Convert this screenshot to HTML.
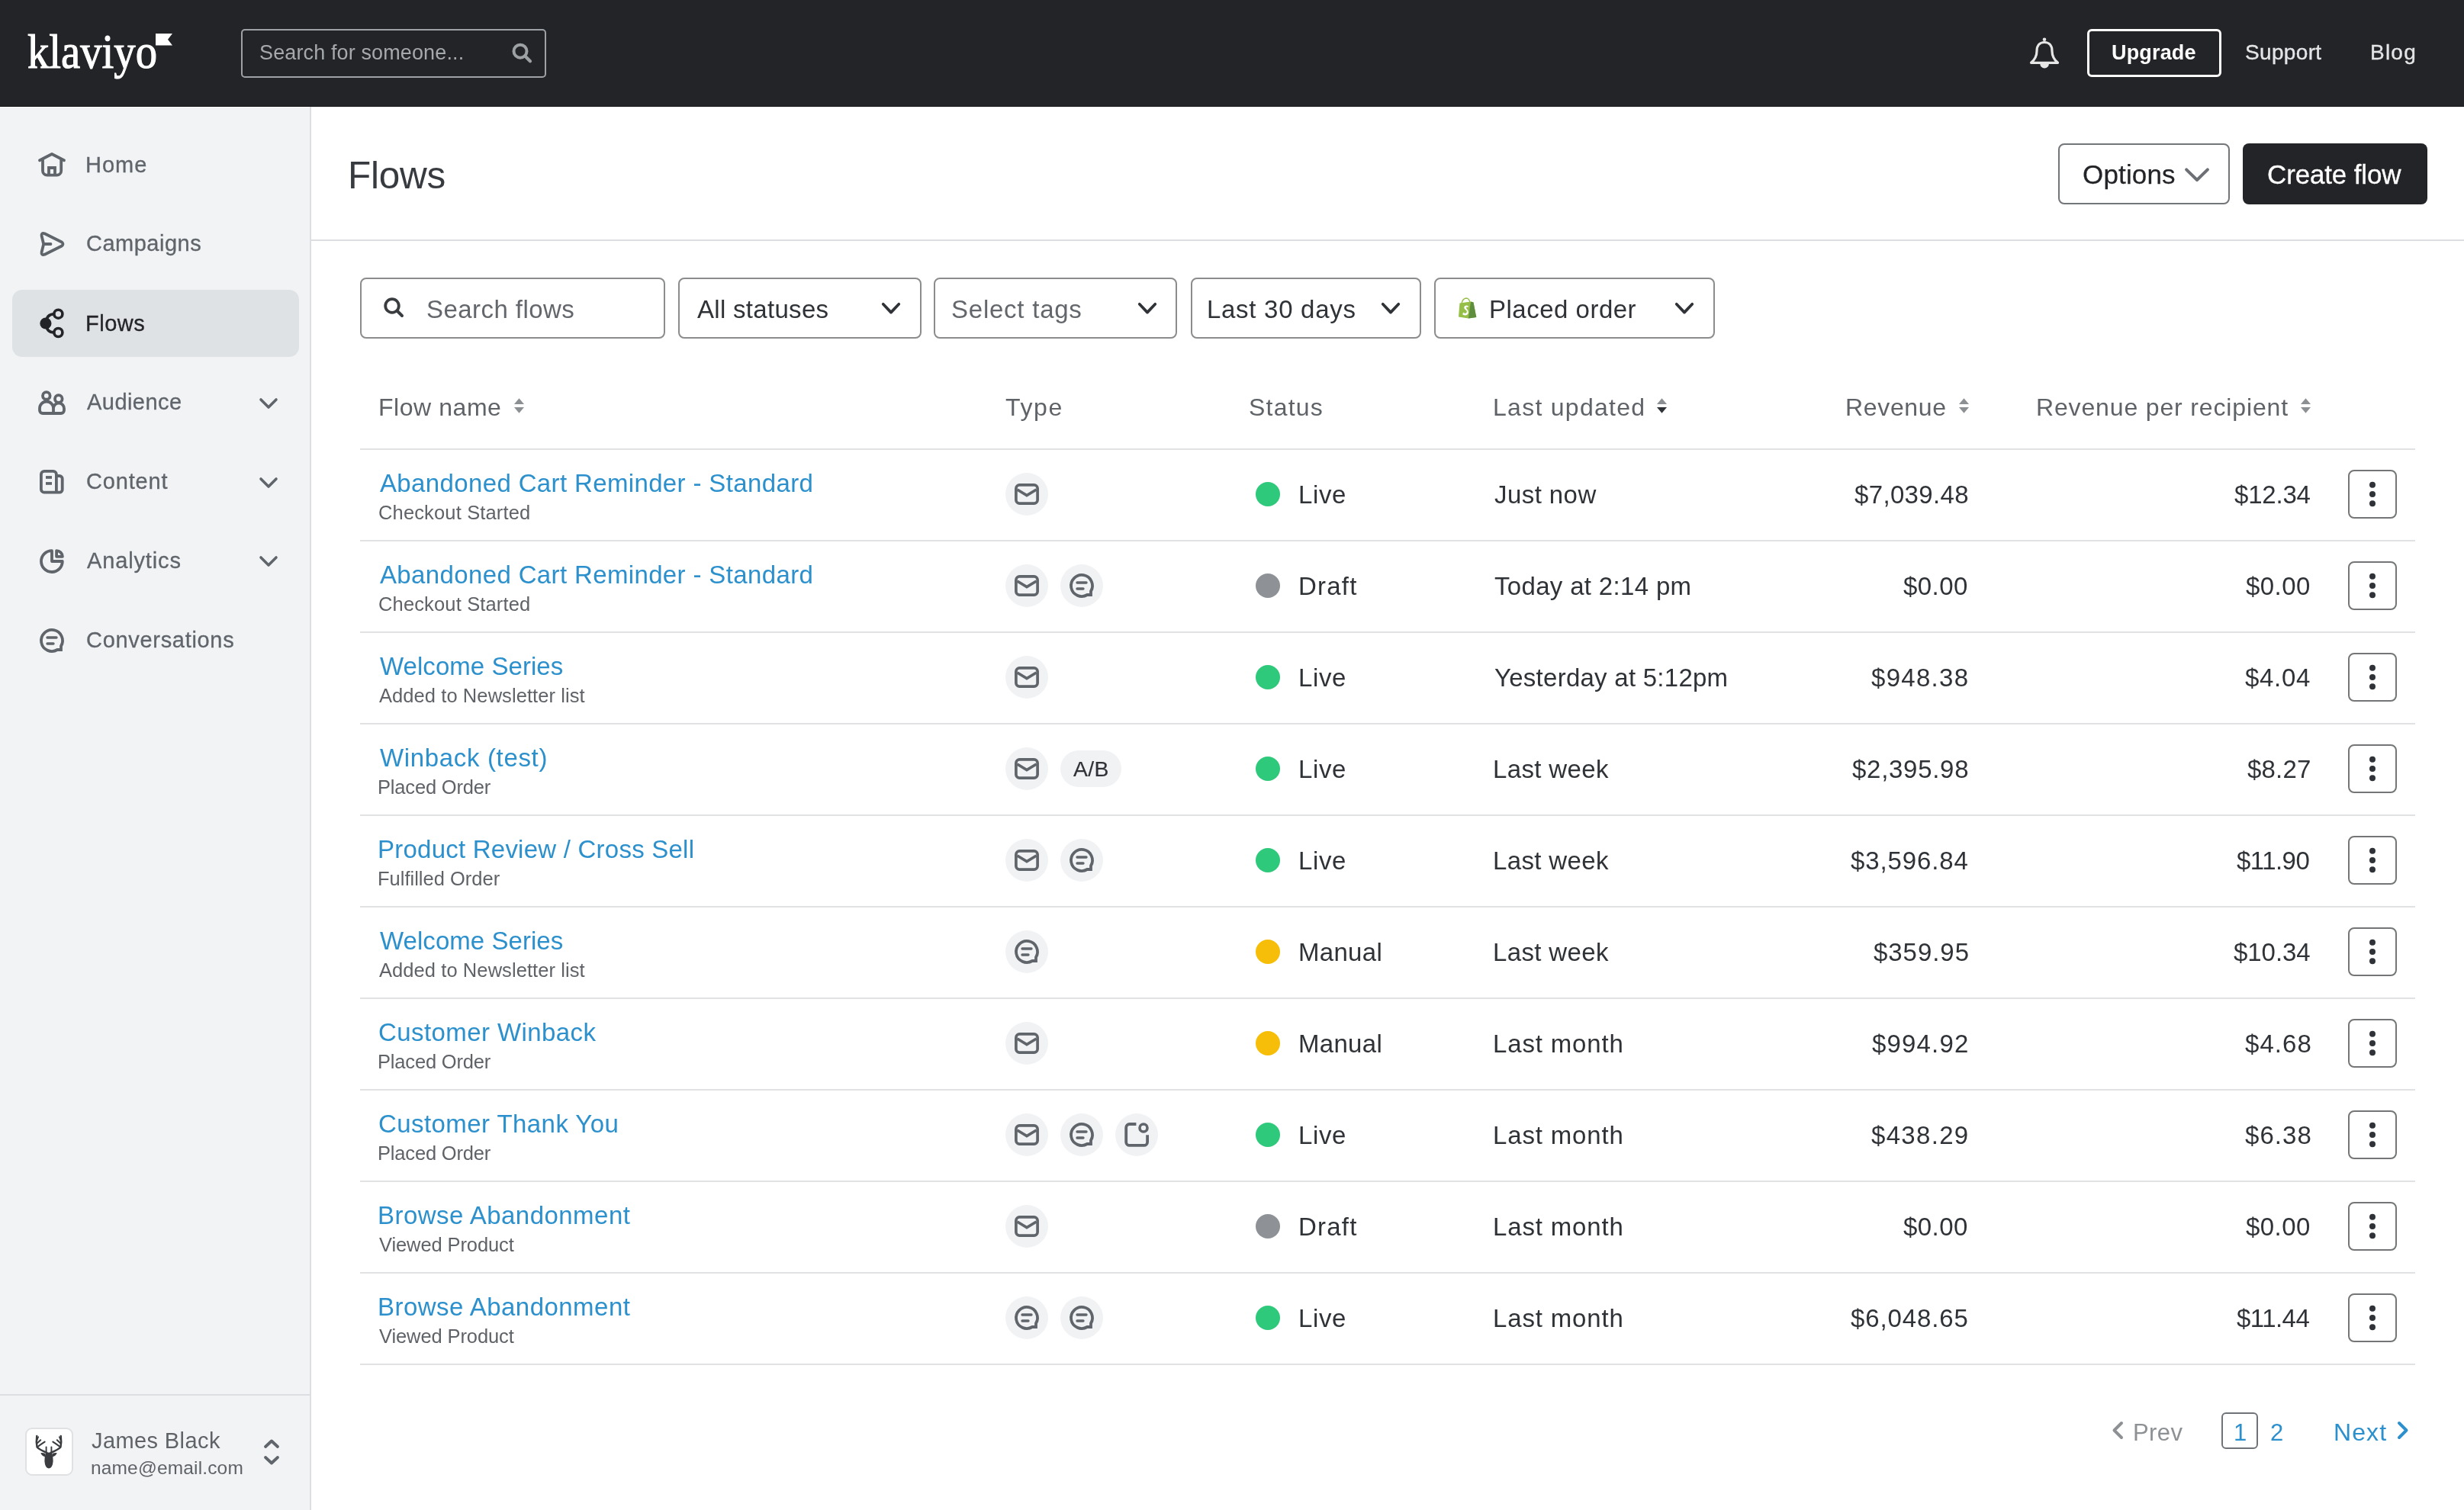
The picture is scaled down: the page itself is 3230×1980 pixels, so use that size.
<!DOCTYPE html>
<html><head><meta charset="utf-8"><title>Flows</title>
<style>
html,body{margin:0;padding:0;}
body{width:3230px;height:1980px;position:relative;overflow:hidden;background:#fff;font-family:'Liberation Sans', sans-serif;}
svg{overflow:visible;}
body>div{will-change:transform;}
</style></head><body>
<div style="position:absolute;left:0px;top:0px;width:3230px;height:140px;box-sizing:border-box;background:#232427;"></div>
<svg style="position:absolute;left:30px;top:30px;" width="210" height="90" viewBox="30 30 210 90"><text x="36" y="89" font-family="Liberation Serif" font-size="64" fill="#fff" stroke="#fff" stroke-width="1.1" textLength="170" lengthAdjust="spacingAndGlyphs">klaviyo</text><path d="M204,44 H226 L220,51.7 L226,59.4 H204 Z" fill="#fff"/></svg>
<div style="position:absolute;left:316px;top:38px;width:400px;height:64px;box-sizing:border-box;border:2.5px solid #9ea1a5;border-radius:5px;"></div>
<div style="position:absolute;left:339.50px;top:56.05px;font-size:27px;line-height:27px;height:27px;color:#a6a9ac;font-weight:400;letter-spacing:0.125px;white-space:nowrap;">Search for someone...</div>
<svg style="position:absolute;left:665px;top:50px;" width="40" height="40" viewBox="665 50 40 40"><circle cx="682" cy="67.2" r="8.5" fill="none" stroke="#9ea1a4" stroke-width="4"/><path d="M688.5,73.7 L695,80.2" stroke="#9ea1a4" stroke-width="4.2" stroke-linecap="round"/></svg>
<svg style="position:absolute;left:2655px;top:45px;" width="50" height="50" viewBox="2655 45 50 50"><circle cx="2680" cy="51.8" r="2.3" fill="#e6e6e6"/><path d="M2680,55.5 C2673.5,55.5 2670,60 2670,67 C2670,74 2667,78.5 2662.5,82.3 H2697.5 C2693,78.5 2690,74 2690,67 C2690,60 2686.5,55.5 2680,55.5 Z" fill="none" stroke="#e6e6e6" stroke-width="3.2" stroke-linejoin="round"/><path d="M2674.2,83.5 A5.9 5.9 0 0 0 2686 83.5 Z" fill="#e6e6e6"/></svg>
<div style="position:absolute;left:2736px;top:38px;width:176px;height:63px;box-sizing:border-box;border:3px solid #fff;border-radius:6px;"></div>
<div style="position:absolute;left:2768.00px;top:56.05px;font-size:27px;line-height:27px;height:27px;color:#fff;font-weight:700;letter-spacing:0.167px;white-space:nowrap;">Upgrade</div>
<div style="position:absolute;left:2943.00px;top:55.20px;font-size:28px;line-height:28px;height:28px;color:#e4e5e6;font-weight:400;letter-spacing:0.333px;white-space:nowrap;-webkit-text-stroke:0.35px #e4e5e6;">Support</div>
<div style="position:absolute;left:3107.00px;top:55.20px;font-size:28px;line-height:28px;height:28px;color:#e4e5e6;font-weight:400;letter-spacing:1.233px;white-space:nowrap;-webkit-text-stroke:0.35px #e4e5e6;">Blog</div>
<div style="position:absolute;left:0px;top:140px;width:406px;height:1840px;box-sizing:border-box;background:#f2f3f5;"></div>
<div style="position:absolute;left:0px;top:139px;width:3230px;height:1px;box-sizing:border-box;background:#161719;"></div>
<div style="position:absolute;left:0px;top:140px;width:406px;height:1px;box-sizing:border-box;background:#fcfcfd;"></div>
<div style="position:absolute;left:406px;top:140px;width:2px;height:1840px;box-sizing:border-box;background:#dcdee1;"></div>
<div style="position:absolute;left:16px;top:380px;width:376px;height:88px;box-sizing:border-box;background:#dfe2e4;border-radius:13px;"></div>
<div style="position:absolute;left:111.50px;top:201.95px;font-size:29px;line-height:29px;height:29px;color:#60656b;font-weight:400;letter-spacing:1.000px;white-space:nowrap;-webkit-text-stroke:0.3px #60656b;">Home</div>
<div style="position:absolute;left:112.50px;top:305.15px;font-size:29px;line-height:29px;height:29px;color:#60656b;font-weight:400;letter-spacing:0.500px;white-space:nowrap;-webkit-text-stroke:0.3px #60656b;">Campaigns</div>
<div style="position:absolute;left:111.50px;top:409.65px;font-size:29px;line-height:29px;height:29px;color:#232427;font-weight:400;letter-spacing:0.500px;white-space:nowrap;-webkit-text-stroke:0.3px #232427;">Flows</div>
<div style="position:absolute;left:113.50px;top:513.35px;font-size:29px;line-height:29px;height:29px;color:#60656b;font-weight:400;letter-spacing:0.457px;white-space:nowrap;-webkit-text-stroke:0.3px #60656b;">Audience</div>
<svg style="position:absolute;left:336px;top:515.7px;" width="32" height="24" viewBox="336 515.7 32 24"><path d="M342,523.7 L352,533.7 L362,523.7" fill="none" stroke="#60656b" stroke-width="3.6" stroke-linecap="round" stroke-linejoin="round"/></svg>
<div style="position:absolute;left:112.50px;top:617.15px;font-size:29px;line-height:29px;height:29px;color:#60656b;font-weight:400;letter-spacing:0.833px;white-space:nowrap;-webkit-text-stroke:0.3px #60656b;">Content</div>
<svg style="position:absolute;left:336px;top:619.5px;" width="32" height="24" viewBox="336 619.5 32 24"><path d="M342,627.5 L352,637.5 L362,627.5" fill="none" stroke="#60656b" stroke-width="3.6" stroke-linecap="round" stroke-linejoin="round"/></svg>
<div style="position:absolute;left:113.50px;top:720.65px;font-size:29px;line-height:29px;height:29px;color:#60656b;font-weight:400;letter-spacing:0.863px;white-space:nowrap;-webkit-text-stroke:0.3px #60656b;">Analytics</div>
<svg style="position:absolute;left:336px;top:723px;" width="32" height="24" viewBox="336 723 32 24"><path d="M342,731 L352,741 L362,731" fill="none" stroke="#60656b" stroke-width="3.6" stroke-linecap="round" stroke-linejoin="round"/></svg>
<div style="position:absolute;left:112.50px;top:824.65px;font-size:29px;line-height:29px;height:29px;color:#60656b;font-weight:400;letter-spacing:0.692px;white-space:nowrap;-webkit-text-stroke:0.3px #60656b;">Conversations</div>
<svg style="position:absolute;left:45px;top:195px;" width="46" height="42" viewBox="45 195 46 42"><path d="M52,210.3 L68,202 L84,210.3" fill="none" stroke="#60656b" stroke-width="3.8" stroke-linecap="round" stroke-linejoin="round"/><path d="M56,210 V224 A5.7 5.7 0 0 0 61.7 229.7 H74.5 A5.7 5.7 0 0 0 80.2 224 V210" fill="none" stroke="#60656b" stroke-width="3.8" stroke-linecap="round" stroke-linejoin="round"/><path d="M64,230 V220 H72 V230" fill="none" stroke="#60656b" stroke-width="3.8"/></svg>
<svg style="position:absolute;left:45px;top:298px;" width="46" height="44" viewBox="45 298 46 44"><g transform="translate(1,0)"><path d="M56.2,320 L53.6,309.5 Q52.8,305 57.5,306.3 L80,317.5 Q83,320 80,322.5 L57.5,333.7 Q52.8,335 53.6,330.5 Z" fill="none" stroke="#60656b" stroke-width="3.8" stroke-linecap="round" stroke-linejoin="round"/><path d="M56.5,320 H65.5" fill="none" stroke="#60656b" stroke-width="3.8" stroke-linecap="round" stroke-linejoin="round"/></g></svg>
<svg style="position:absolute;left:45px;top:398px;" width="46" height="52" viewBox="45 398 46 52"><circle cx="59.9" cy="424" r="7.6" fill="#232427"/><circle cx="76.4" cy="411.7" r="5.5" fill="none" stroke="#232427" stroke-width="3.6"/><circle cx="76.4" cy="436" r="5.5" fill="none" stroke="#232427" stroke-width="3.6"/><path d="M60.5,424 C60.5,416 64,411.7 71,411.7 M60.5,424 C60.5,432 64,436 71,436" fill="none" stroke="#232427" stroke-width="3.6"/></svg>
<svg style="position:absolute;left:45px;top:505px;" width="46" height="44" viewBox="45 505 46 44"><circle cx="60.8" cy="518.9" r="4.8" fill="none" stroke="#60656b" stroke-width="3.8" stroke-linecap="round" stroke-linejoin="round"/><circle cx="76.8" cy="523" r="4.8" fill="none" stroke="#60656b" stroke-width="3.8" stroke-linecap="round" stroke-linejoin="round"/><path d="M70,542 H56 A4 4 0 0 1 52,538 V535.5 A9 9 0 0 1 70,535.5 V542 M70,535.5 A7 7 0 0 1 84,535.5 V538 A4 4 0 0 1 80,542 H70" fill="none" stroke="#60656b" stroke-width="3.8" stroke-linecap="round" stroke-linejoin="round"/></svg>
<svg style="position:absolute;left:45px;top:610px;" width="46" height="44" viewBox="45 610 46 44"><path d="M73.9,645.7 H58 A4.1 4.1 0 0 1 53.9,641.6 V622 A4.2 4.2 0 0 1 58.1,617.8 H69.7 A4.2 4.2 0 0 1 73.9,622 V645.7 M73.9,624 H77.9 A3.8 3.8 0 0 1 81.7,627.8 V641.9 A3.8 3.8 0 0 1 77.9,645.7 H73.9" fill="none" stroke="#60656b" stroke-width="3.8" stroke-linecap="round" stroke-linejoin="round"/><rect x="60" y="624.1" width="8" height="3.7" fill="#60656b"/><rect x="60" y="632.1" width="8" height="3.7" fill="#60656b"/></svg>
<svg style="position:absolute;left:45px;top:714px;" width="46" height="44" viewBox="45 714 46 44"><path d="M68,722.2 V736 H81.8 A13.9 13.9 0 1 1 68,722.2 Z" fill="none" stroke="#60656b" stroke-width="3.8" stroke-linecap="round" stroke-linejoin="round"/><path d="M74.1,729.8 V722.1 A7.8 7.8 0 0 1 81.9,729.8 Z" fill="none" stroke="#60656b" stroke-width="3.8" stroke-linecap="round" stroke-linejoin="round"/></svg>
<svg style="position:absolute;left:45px;top:818px;" width="46" height="44" viewBox="45 818 46 44"><path d="M75.2,852 A14 14 0 1 1 80,847.2 V852 Z" fill="none" stroke="#60656b" stroke-width="3.8" stroke-linejoin="miter"/><path d="M62,836 H74 M62,844 H70" stroke="#60656b" stroke-width="3.4" stroke-linecap="round"/></svg>
<div style="position:absolute;left:0px;top:1828px;width:406px;height:2px;box-sizing:border-box;background:#dcdee1;"></div>
<div style="position:absolute;left:33px;top:1872px;width:63px;height:63px;box-sizing:border-box;background:#fff;border:2px solid #dfe1e3;border-radius:9px;"></div>
<svg style="position:absolute;left:40px;top:1876px;" width="48" height="56" viewBox="40 1876 48 56"><g fill="#3a3c3f"><path d="M60,1905.5 Q64,1903.5 68,1905.5 Q70,1910 69.6,1916 Q69,1925 64,1925.5 Q59,1925 58.4,1916 Q58,1910 60,1905.5 Z"/><path d="M59.5,1906 Q55.5,1904.6 53.3,1905.2 Q55,1909.8 59.8,1910.3 Z M68.5,1906 Q72.5,1904.6 74.7,1905.2 Q73,1909.8 68.2,1910.3 Z"/></g><g fill="none" stroke="#3a3c3f" stroke-width="2.5" stroke-linecap="round"><path d="M61.5,1905 Q51,1900.5 48.6,1897.5 Q47.2,1891 48.3,1883"/><path d="M48.6,1892.5 Q51,1890.5 53.2,1888.3" stroke-width="2"/><path d="M49.5,1897 Q54,1893.5 58.6,1890.6" stroke-width="2.2"/><path d="M48.5,1888.5 Q49.6,1885.6 50.3,1884.2" stroke-width="1.6"/><path d="M60.6,1903.5 V1897.5" stroke-width="1.9"/><path d="M66.5,1905 Q77,1900.5 79.4,1897.5 Q80.8,1891 79.7,1883"/><path d="M79.4,1892.5 Q77,1890.5 74.8,1888.3" stroke-width="2"/><path d="M78.5,1897 Q74,1893.5 69.4,1890.6" stroke-width="2.2"/><path d="M79.5,1888.5 Q78.4,1885.6 77.7,1884.2" stroke-width="1.6"/><path d="M67.4,1903.5 V1897.5" stroke-width="1.9"/></g></svg>
<div style="position:absolute;left:120.00px;top:1874.85px;font-size:29px;line-height:29px;height:29px;color:#5f6368;font-weight:400;letter-spacing:0.400px;white-space:nowrap;">James Black</div>
<div style="position:absolute;left:119.00px;top:1912.67px;font-size:24.5px;line-height:24.5px;height:24.5px;color:#5f6368;font-weight:400;letter-spacing:0.154px;white-space:nowrap;">name@email.com</div>
<svg style="position:absolute;left:340px;top:1882px;" width="32" height="44" viewBox="340 1882 32 44"><path d="M348,1897 L356,1889.5 L364,1897 M348,1911 L356,1918.5 L364,1911" fill="none" stroke="#60656b" stroke-width="3.8" stroke-linecap="round" stroke-linejoin="round"/></svg>
<div style="position:absolute;left:456.00px;top:204.53px;font-size:49.5px;line-height:49.5px;height:49.5px;color:#373a3f;font-weight:400;letter-spacing:-0.250px;white-space:nowrap;">Flows</div>
<div style="position:absolute;left:2698px;top:188px;width:225px;height:80px;box-sizing:border-box;border:2px solid #737679;border-radius:8px;background:#fff;"></div>
<div style="position:absolute;left:2730.00px;top:211.05px;font-size:35px;line-height:35px;height:35px;color:#232427;font-weight:400;letter-spacing:0.167px;white-space:nowrap;-webkit-text-stroke:0.25px #232427;">Options</div>
<svg style="position:absolute;left:2858px;top:214px;" width="44" height="30" viewBox="2858 214 44 30"><path d="M2866.1,222.3 L2880,236 L2893.9,222.3" fill="none" stroke="#6c6f73" stroke-width="4" stroke-linecap="round" stroke-linejoin="round"/></svg>
<div style="position:absolute;left:2940px;top:188px;width:242px;height:80px;box-sizing:border-box;background:#232427;border-radius:8px;"></div>
<div style="position:absolute;left:2971.50px;top:211.05px;font-size:35px;line-height:35px;height:35px;color:#fff;font-weight:400;letter-spacing:-0.150px;white-space:nowrap;-webkit-text-stroke:0.3px #fff;">Create flow</div>
<div style="position:absolute;left:408px;top:314px;width:2822px;height:2px;box-sizing:border-box;background:#dcdee1;"></div>
<div style="position:absolute;left:472px;top:364px;width:400px;height:80px;box-sizing:border-box;border:2px solid #8a8c8e;border-radius:8px;"></div>
<svg style="position:absolute;left:495px;top:383px;" width="42" height="42" viewBox="495 383 42 42"><circle cx="514" cy="401" r="8.8" fill="none" stroke="#3a3d40" stroke-width="3.8"/><path d="M520.5,407.5 L527,414" stroke="#3a3d40" stroke-width="4" stroke-linecap="round"/></svg>
<div style="position:absolute;left:559.00px;top:388.95px;font-size:33px;line-height:33px;height:33px;color:#63676c;font-weight:400;letter-spacing:0.436px;white-space:nowrap;">Search flows</div>
<div style="position:absolute;left:889px;top:364px;width:319px;height:80px;box-sizing:border-box;border:2px solid #8a8c8e;border-radius:8px;"></div>
<div style="position:absolute;left:913.70px;top:388.95px;font-size:33px;line-height:33px;height:33px;color:#2f3236;font-weight:400;letter-spacing:0.300px;white-space:nowrap;">All statuses</div>
<svg style="position:absolute;left:1149px;top:390px;" width="38" height="28" viewBox="1149 390 38 28"><path d="M1157.7,398.8 L1168.0,409.6 L1178.3,398.8" fill="none" stroke="#2f3236" stroke-width="3.7" stroke-linecap="round" stroke-linejoin="round"/></svg>
<div style="position:absolute;left:1224px;top:364px;width:319px;height:80px;box-sizing:border-box;border:2px solid #8a8c8e;border-radius:8px;"></div>
<div style="position:absolute;left:1247.00px;top:388.95px;font-size:33px;line-height:33px;height:33px;color:#63676c;font-weight:400;letter-spacing:0.760px;white-space:nowrap;">Select tags</div>
<svg style="position:absolute;left:1485px;top:390px;" width="38" height="28" viewBox="1485 390 38 28"><path d="M1493.7,398.8 L1504.0,409.6 L1514.3,398.8" fill="none" stroke="#2f3236" stroke-width="3.7" stroke-linecap="round" stroke-linejoin="round"/></svg>
<div style="position:absolute;left:1561px;top:364px;width:302px;height:80px;box-sizing:border-box;border:2px solid #8a8c8e;border-radius:8px;"></div>
<div style="position:absolute;left:1582.00px;top:388.95px;font-size:33px;line-height:33px;height:33px;color:#2f3236;font-weight:400;letter-spacing:0.709px;white-space:nowrap;">Last 30 days</div>
<svg style="position:absolute;left:1804px;top:390px;" width="38" height="28" viewBox="1804 390 38 28"><path d="M1812.7,398.8 L1823.0,409.6 L1833.3,398.8" fill="none" stroke="#2f3236" stroke-width="3.7" stroke-linecap="round" stroke-linejoin="round"/></svg>
<div style="position:absolute;left:1880px;top:364px;width:368px;height:80px;box-sizing:border-box;border:2px solid #8a8c8e;border-radius:8px;"></div>
<div style="position:absolute;left:1952.00px;top:388.95px;font-size:33px;line-height:33px;height:33px;color:#2f3236;font-weight:400;letter-spacing:0.500px;white-space:nowrap;">Placed order</div>
<svg style="position:absolute;left:2189px;top:390px;" width="38" height="28" viewBox="2189 390 38 28"><path d="M2197.7,398.8 L2208.0,409.6 L2218.3,398.8" fill="none" stroke="#2f3236" stroke-width="3.7" stroke-linecap="round" stroke-linejoin="round"/></svg>
<svg style="position:absolute;left:1908px;top:386px;" width="32" height="34" viewBox="1908 386 32 34"><path d="M1916,398.5 Q1917,391.5 1922,391 Q1926,391 1927,397" fill="none" stroke="#95bf47" stroke-width="1.4"/><path d="M1913.5,397.5 L1928,395.5 L1931.5,396.5 L1935.3,416 L1925,417.5 L1912,415.5 Z" fill="#95bf47"/><path d="M1928,395.5 L1931.5,396.5 L1935.3,416 L1925,417.5 Z" fill="#5e8e3e"/><path d="M1924.5,401 Q1921,399.5 1919.5,402 Q1918.5,404.5 1921.5,406.5 Q1924,408.5 1922,410.5 Q1920,411.5 1918,409.5 L1917.3,412.5 Q1921,414.5 1923.5,412.5 Q1926,410 1924,406.5 Q1921.5,404 1922.2,402.8 Q1923,402 1924.8,403 Z" fill="#fff"/></svg>
<div style="position:absolute;left:495.60px;top:517.80px;font-size:32px;line-height:32px;height:32px;color:#5f6368;font-weight:400;letter-spacing:0.550px;white-space:nowrap;">Flow name</div>
<svg style="position:absolute;left:673px;top:520px;" width="16" height="24" viewBox="673 520 16 24"><path d="M674,530 L680.5,522.3 L687,530 Z" fill="#8d9093"/><path d="M674,534 L680.5,541.8 L687,534 Z" fill="#8d9093"/></svg>
<div style="position:absolute;left:1318.00px;top:517.80px;font-size:32px;line-height:32px;height:32px;color:#5f6368;font-weight:400;letter-spacing:1.667px;white-space:nowrap;">Type</div>
<div style="position:absolute;left:1637.40px;top:517.80px;font-size:32px;line-height:32px;height:32px;color:#5f6368;font-weight:400;letter-spacing:1.200px;white-space:nowrap;">Status</div>
<div style="position:absolute;left:1957.00px;top:517.80px;font-size:32px;line-height:32px;height:32px;color:#5f6368;font-weight:400;letter-spacing:1.273px;white-space:nowrap;">Last updated</div>
<svg style="position:absolute;left:2171px;top:520px;" width="16" height="24" viewBox="2171 520 16 24"><path d="M2172,530 L2178.5,522.3 L2185,530 Z" fill="#8d9093"/><path d="M2172,534 L2178.5,541.8 L2185,534 Z" fill="#2f3236"/></svg>
<div style="position:absolute;left:2419.00px;top:517.80px;font-size:32px;line-height:32px;height:32px;color:#5f6368;font-weight:400;letter-spacing:0.667px;white-space:nowrap;">Revenue</div>
<svg style="position:absolute;left:2567px;top:520px;" width="16" height="24" viewBox="2567 520 16 24"><path d="M2568,530 L2574.5,522.3 L2581,530 Z" fill="#8d9093"/><path d="M2568,534 L2574.5,541.8 L2581,534 Z" fill="#8d9093"/></svg>
<div style="position:absolute;left:2668.50px;top:517.80px;font-size:32px;line-height:32px;height:32px;color:#5f6368;font-weight:400;letter-spacing:0.850px;white-space:nowrap;">Revenue per recipient</div>
<svg style="position:absolute;left:3015px;top:520px;" width="16" height="24" viewBox="3015 520 16 24"><path d="M3016,530 L3022.5,522.3 L3029,530 Z" fill="#8d9093"/><path d="M3016,534 L3022.5,541.8 L3029,534 Z" fill="#8d9093"/></svg>
<div style="position:absolute;left:472px;top:588px;width:2694px;height:2px;box-sizing:border-box;background:#e1e2e3;"></div>
<div style="position:absolute;left:472px;top:708px;width:2694px;height:2px;box-sizing:border-box;background:#e1e2e3;"></div>
<div style="position:absolute;left:472px;top:828px;width:2694px;height:2px;box-sizing:border-box;background:#e1e2e3;"></div>
<div style="position:absolute;left:472px;top:948px;width:2694px;height:2px;box-sizing:border-box;background:#e1e2e3;"></div>
<div style="position:absolute;left:472px;top:1068px;width:2694px;height:2px;box-sizing:border-box;background:#e1e2e3;"></div>
<div style="position:absolute;left:472px;top:1188px;width:2694px;height:2px;box-sizing:border-box;background:#e1e2e3;"></div>
<div style="position:absolute;left:472px;top:1308px;width:2694px;height:2px;box-sizing:border-box;background:#e1e2e3;"></div>
<div style="position:absolute;left:472px;top:1428px;width:2694px;height:2px;box-sizing:border-box;background:#e1e2e3;"></div>
<div style="position:absolute;left:472px;top:1548px;width:2694px;height:2px;box-sizing:border-box;background:#e1e2e3;"></div>
<div style="position:absolute;left:472px;top:1668px;width:2694px;height:2px;box-sizing:border-box;background:#e1e2e3;"></div>
<div style="position:absolute;left:472px;top:1788px;width:2694px;height:2px;box-sizing:border-box;background:#e1e2e3;"></div>
<div style="position:absolute;left:497.50px;top:616.65px;font-size:33px;line-height:33px;height:33px;color:#2c90cd;font-weight:400;letter-spacing:0.364px;white-space:nowrap;">Abandoned Cart Reminder - Standard</div>
<div style="position:absolute;left:496.00px;top:659.83px;font-size:25.5px;line-height:25.5px;height:25.5px;color:#5f6368;font-weight:400;letter-spacing:0.147px;white-space:nowrap;">Checkout Started</div>
<div style="position:absolute;left:1318px;top:620px;width:56px;height:56px;box-sizing:border-box;background:#f1f2f4;border-radius:50%;"></div>
<svg style="position:absolute;left:1326px;top:628px;" width="40" height="40" viewBox="1326 628 40 40"><rect x="1331.9" y="635.9" width="28.2" height="24.2" rx="4.6" fill="none" stroke="#60656b" stroke-width="3.7"/><path d="M1333.5,642 L1346,649.6 L1358.5,642" fill="none" stroke="#60656b" stroke-width="3.7" stroke-linejoin="miter"/></svg>
<div style="position:absolute;left:1646px;top:632px;width:32px;height:32px;box-sizing:border-box;background:#2fc97b;border-radius:50%;"></div>
<div style="position:absolute;left:1701.70px;top:631.95px;font-size:33px;line-height:33px;height:33px;color:#2f3236;font-weight:400;letter-spacing:0.600px;white-space:nowrap;">Live</div>
<div style="position:absolute;left:1959.30px;top:631.95px;font-size:33px;line-height:33px;height:33px;color:#2f3236;font-weight:400;letter-spacing:0.429px;white-space:nowrap;">Just now</div>
<div style="position:absolute;left:2430.50px;top:631.95px;font-size:33px;line-height:33px;height:33px;color:#2f3236;font-weight:400;letter-spacing:0.337px;white-space:nowrap;">$7,039.48</div>
<div style="position:absolute;left:2928.70px;top:631.95px;font-size:33px;line-height:33px;height:33px;color:#2f3236;font-weight:400;letter-spacing:-0.200px;white-space:nowrap;">$12.34</div>
<div style="position:absolute;left:3078px;top:616px;width:64px;height:64px;box-sizing:border-box;border:2px solid #737577;border-radius:8px;"></div>
<svg style="position:absolute;left:3100px;top:626px;" width="20" height="44" viewBox="3100 626 20 44"><circle cx="3110" cy="635.8" r="4" fill="#2f3236"/><circle cx="3110" cy="648" r="4" fill="#2f3236"/><circle cx="3110" cy="660.2" r="4" fill="#2f3236"/></svg>
<div style="position:absolute;left:497.50px;top:736.65px;font-size:33px;line-height:33px;height:33px;color:#2c90cd;font-weight:400;letter-spacing:0.364px;white-space:nowrap;">Abandoned Cart Reminder - Standard</div>
<div style="position:absolute;left:496.00px;top:779.83px;font-size:25.5px;line-height:25.5px;height:25.5px;color:#5f6368;font-weight:400;letter-spacing:0.147px;white-space:nowrap;">Checkout Started</div>
<div style="position:absolute;left:1318px;top:740px;width:56px;height:56px;box-sizing:border-box;background:#f1f2f4;border-radius:50%;"></div>
<svg style="position:absolute;left:1326px;top:748px;" width="40" height="40" viewBox="1326 748 40 40"><rect x="1331.9" y="755.9" width="28.2" height="24.2" rx="4.6" fill="none" stroke="#60656b" stroke-width="3.7"/><path d="M1333.5,762 L1346,769.6 L1358.5,762" fill="none" stroke="#60656b" stroke-width="3.7" stroke-linejoin="miter"/></svg>
<div style="position:absolute;left:1390px;top:740px;width:56px;height:56px;box-sizing:border-box;background:#f1f2f4;border-radius:50%;"></div>
<svg style="position:absolute;left:1398px;top:748px;" width="40" height="40" viewBox="1398 748 40 40"><path d="M1425.2,780 A14 14 0 1 1 1430,775.2 V780 Z" fill="none" stroke="#60656b" stroke-width="3.8" stroke-linejoin="miter"/><path d="M1412,764 H1424 M1412,772 H1420" stroke="#60656b" stroke-width="3.4" stroke-linecap="round"/></svg>
<div style="position:absolute;left:1646px;top:752px;width:32px;height:32px;box-sizing:border-box;background:#8e9196;border-radius:50%;"></div>
<div style="position:absolute;left:1701.70px;top:751.95px;font-size:33px;line-height:33px;height:33px;color:#2f3236;font-weight:400;letter-spacing:1.200px;white-space:nowrap;">Draft</div>
<div style="position:absolute;left:1959.30px;top:751.95px;font-size:33px;line-height:33px;height:33px;color:#2f3236;font-weight:400;letter-spacing:0.327px;white-space:nowrap;">Today at 2:14 pm</div>
<div style="position:absolute;left:2495.40px;top:751.95px;font-size:33px;line-height:33px;height:33px;color:#2f3236;font-weight:400;letter-spacing:0.450px;white-space:nowrap;">$0.00</div>
<div style="position:absolute;left:2943.90px;top:751.95px;font-size:33px;line-height:33px;height:33px;color:#2f3236;font-weight:400;letter-spacing:0.450px;white-space:nowrap;">$0.00</div>
<div style="position:absolute;left:3078px;top:736px;width:64px;height:64px;box-sizing:border-box;border:2px solid #737577;border-radius:8px;"></div>
<svg style="position:absolute;left:3100px;top:746px;" width="20" height="44" viewBox="3100 746 20 44"><circle cx="3110" cy="755.8" r="4" fill="#2f3236"/><circle cx="3110" cy="768" r="4" fill="#2f3236"/><circle cx="3110" cy="780.2" r="4" fill="#2f3236"/></svg>
<div style="position:absolute;left:497.50px;top:856.65px;font-size:33px;line-height:33px;height:33px;color:#2c90cd;font-weight:400;letter-spacing:0.046px;white-space:nowrap;">Welcome Series</div>
<div style="position:absolute;left:497.00px;top:899.83px;font-size:25.5px;line-height:25.5px;height:25.5px;color:#5f6368;font-weight:400;letter-spacing:0.078px;white-space:nowrap;">Added to Newsletter list</div>
<div style="position:absolute;left:1318px;top:860px;width:56px;height:56px;box-sizing:border-box;background:#f1f2f4;border-radius:50%;"></div>
<svg style="position:absolute;left:1326px;top:868px;" width="40" height="40" viewBox="1326 868 40 40"><rect x="1331.9" y="875.9" width="28.2" height="24.2" rx="4.6" fill="none" stroke="#60656b" stroke-width="3.7"/><path d="M1333.5,882 L1346,889.6 L1358.5,882" fill="none" stroke="#60656b" stroke-width="3.7" stroke-linejoin="miter"/></svg>
<div style="position:absolute;left:1646px;top:872px;width:32px;height:32px;box-sizing:border-box;background:#2fc97b;border-radius:50%;"></div>
<div style="position:absolute;left:1701.70px;top:871.95px;font-size:33px;line-height:33px;height:33px;color:#2f3236;font-weight:400;letter-spacing:0.600px;white-space:nowrap;">Live</div>
<div style="position:absolute;left:1959.30px;top:871.95px;font-size:33px;line-height:33px;height:33px;color:#2f3236;font-weight:400;letter-spacing:0.256px;white-space:nowrap;">Yesterday at 5:12pm</div>
<div style="position:absolute;left:2453.40px;top:871.95px;font-size:33px;line-height:33px;height:33px;color:#2f3236;font-weight:400;letter-spacing:1.300px;white-space:nowrap;">$948.38</div>
<div style="position:absolute;left:2943.00px;top:871.95px;font-size:33px;line-height:33px;height:33px;color:#2f3236;font-weight:400;letter-spacing:0.675px;white-space:nowrap;">$4.04</div>
<div style="position:absolute;left:3078px;top:856px;width:64px;height:64px;box-sizing:border-box;border:2px solid #737577;border-radius:8px;"></div>
<svg style="position:absolute;left:3100px;top:866px;" width="20" height="44" viewBox="3100 866 20 44"><circle cx="3110" cy="875.8" r="4" fill="#2f3236"/><circle cx="3110" cy="888" r="4" fill="#2f3236"/><circle cx="3110" cy="900.2" r="4" fill="#2f3236"/></svg>
<div style="position:absolute;left:497.50px;top:976.65px;font-size:33px;line-height:33px;height:33px;color:#2c90cd;font-weight:400;letter-spacing:0.654px;white-space:nowrap;">Winback (test)</div>
<div style="position:absolute;left:495.00px;top:1019.83px;font-size:25.5px;line-height:25.5px;height:25.5px;color:#5f6368;font-weight:400;letter-spacing:-0.182px;white-space:nowrap;">Placed Order</div>
<div style="position:absolute;left:1318px;top:980px;width:56px;height:56px;box-sizing:border-box;background:#f1f2f4;border-radius:50%;"></div>
<svg style="position:absolute;left:1326px;top:988px;" width="40" height="40" viewBox="1326 988 40 40"><rect x="1331.9" y="995.9" width="28.2" height="24.2" rx="4.6" fill="none" stroke="#60656b" stroke-width="3.7"/><path d="M1333.5,1002 L1346,1009.6 L1358.5,1002" fill="none" stroke="#60656b" stroke-width="3.7" stroke-linejoin="miter"/></svg>
<div style="position:absolute;left:1390px;top:984px;width:80px;height:48px;box-sizing:border-box;background:#f1f2f4;border-radius:24px;"></div>
<div style="position:absolute;left:1407.00px;top:994.15px;font-size:28.3px;line-height:28.3px;height:28.3px;color:#2f3236;font-weight:400;letter-spacing:0.400px;white-space:nowrap;-webkit-text-stroke:0.2px #2f3236;">A/B</div>
<div style="position:absolute;left:1646px;top:992px;width:32px;height:32px;box-sizing:border-box;background:#2fc97b;border-radius:50%;"></div>
<div style="position:absolute;left:1701.70px;top:991.95px;font-size:33px;line-height:33px;height:33px;color:#2f3236;font-weight:400;letter-spacing:0.600px;white-space:nowrap;">Live</div>
<div style="position:absolute;left:1957.30px;top:991.95px;font-size:33px;line-height:33px;height:33px;color:#2f3236;font-weight:400;letter-spacing:0.350px;white-space:nowrap;">Last week</div>
<div style="position:absolute;left:2427.50px;top:991.95px;font-size:33px;line-height:33px;height:33px;color:#2f3236;font-weight:400;letter-spacing:0.712px;white-space:nowrap;">$2,395.98</div>
<div style="position:absolute;left:2945.90px;top:991.95px;font-size:33px;line-height:33px;height:33px;color:#2f3236;font-weight:400;letter-spacing:0.200px;white-space:nowrap;">$8.27</div>
<div style="position:absolute;left:3078px;top:976px;width:64px;height:64px;box-sizing:border-box;border:2px solid #737577;border-radius:8px;"></div>
<svg style="position:absolute;left:3100px;top:986px;" width="20" height="44" viewBox="3100 986 20 44"><circle cx="3110" cy="995.8" r="4" fill="#2f3236"/><circle cx="3110" cy="1008" r="4" fill="#2f3236"/><circle cx="3110" cy="1020.2" r="4" fill="#2f3236"/></svg>
<div style="position:absolute;left:494.50px;top:1096.65px;font-size:33px;line-height:33px;height:33px;color:#2c90cd;font-weight:400;letter-spacing:0.231px;white-space:nowrap;">Product Review / Cross Sell</div>
<div style="position:absolute;left:495.00px;top:1139.83px;font-size:25.5px;line-height:25.5px;height:25.5px;color:#5f6368;font-weight:400;letter-spacing:0.000px;white-space:nowrap;">Fulfilled Order</div>
<div style="position:absolute;left:1318px;top:1100px;width:56px;height:56px;box-sizing:border-box;background:#f1f2f4;border-radius:50%;"></div>
<svg style="position:absolute;left:1326px;top:1108px;" width="40" height="40" viewBox="1326 1108 40 40"><rect x="1331.9" y="1115.9" width="28.2" height="24.2" rx="4.6" fill="none" stroke="#60656b" stroke-width="3.7"/><path d="M1333.5,1122 L1346,1129.6 L1358.5,1122" fill="none" stroke="#60656b" stroke-width="3.7" stroke-linejoin="miter"/></svg>
<div style="position:absolute;left:1390px;top:1100px;width:56px;height:56px;box-sizing:border-box;background:#f1f2f4;border-radius:50%;"></div>
<svg style="position:absolute;left:1398px;top:1108px;" width="40" height="40" viewBox="1398 1108 40 40"><path d="M1425.2,1140 A14 14 0 1 1 1430,1135.2 V1140 Z" fill="none" stroke="#60656b" stroke-width="3.8" stroke-linejoin="miter"/><path d="M1412,1124 H1424 M1412,1132 H1420" stroke="#60656b" stroke-width="3.4" stroke-linecap="round"/></svg>
<div style="position:absolute;left:1646px;top:1112px;width:32px;height:32px;box-sizing:border-box;background:#2fc97b;border-radius:50%;"></div>
<div style="position:absolute;left:1701.70px;top:1111.95px;font-size:33px;line-height:33px;height:33px;color:#2f3236;font-weight:400;letter-spacing:0.600px;white-space:nowrap;">Live</div>
<div style="position:absolute;left:1957.30px;top:1111.95px;font-size:33px;line-height:33px;height:33px;color:#2f3236;font-weight:400;letter-spacing:0.350px;white-space:nowrap;">Last week</div>
<div style="position:absolute;left:2426.20px;top:1111.95px;font-size:33px;line-height:33px;height:33px;color:#2f3236;font-weight:400;letter-spacing:0.875px;white-space:nowrap;">$3,596.84</div>
<div style="position:absolute;left:2932.40px;top:1111.95px;font-size:33px;line-height:33px;height:33px;color:#2f3236;font-weight:400;letter-spacing:-0.540px;white-space:nowrap;">$11.90</div>
<div style="position:absolute;left:3078px;top:1096px;width:64px;height:64px;box-sizing:border-box;border:2px solid #737577;border-radius:8px;"></div>
<svg style="position:absolute;left:3100px;top:1106px;" width="20" height="44" viewBox="3100 1106 20 44"><circle cx="3110" cy="1115.8" r="4" fill="#2f3236"/><circle cx="3110" cy="1128" r="4" fill="#2f3236"/><circle cx="3110" cy="1140.2" r="4" fill="#2f3236"/></svg>
<div style="position:absolute;left:497.50px;top:1216.65px;font-size:33px;line-height:33px;height:33px;color:#2c90cd;font-weight:400;letter-spacing:0.046px;white-space:nowrap;">Welcome Series</div>
<div style="position:absolute;left:497.00px;top:1259.83px;font-size:25.5px;line-height:25.5px;height:25.5px;color:#5f6368;font-weight:400;letter-spacing:0.078px;white-space:nowrap;">Added to Newsletter list</div>
<div style="position:absolute;left:1318px;top:1220px;width:56px;height:56px;box-sizing:border-box;background:#f1f2f4;border-radius:50%;"></div>
<svg style="position:absolute;left:1326px;top:1228px;" width="40" height="40" viewBox="1326 1228 40 40"><path d="M1353.2,1260 A14 14 0 1 1 1358,1255.2 V1260 Z" fill="none" stroke="#60656b" stroke-width="3.8" stroke-linejoin="miter"/><path d="M1340,1244 H1352 M1340,1252 H1348" stroke="#60656b" stroke-width="3.4" stroke-linecap="round"/></svg>
<div style="position:absolute;left:1646px;top:1232px;width:32px;height:32px;box-sizing:border-box;background:#f6be08;border-radius:50%;"></div>
<div style="position:absolute;left:1701.70px;top:1231.95px;font-size:33px;line-height:33px;height:33px;color:#2f3236;font-weight:400;letter-spacing:0.300px;white-space:nowrap;">Manual</div>
<div style="position:absolute;left:1957.30px;top:1231.95px;font-size:33px;line-height:33px;height:33px;color:#2f3236;font-weight:400;letter-spacing:0.350px;white-space:nowrap;">Last week</div>
<div style="position:absolute;left:2455.50px;top:1231.95px;font-size:33px;line-height:33px;height:33px;color:#2f3236;font-weight:400;letter-spacing:0.950px;white-space:nowrap;">$359.95</div>
<div style="position:absolute;left:2928.00px;top:1231.95px;font-size:33px;line-height:33px;height:33px;color:#2f3236;font-weight:400;letter-spacing:-0.060px;white-space:nowrap;">$10.34</div>
<div style="position:absolute;left:3078px;top:1216px;width:64px;height:64px;box-sizing:border-box;border:2px solid #737577;border-radius:8px;"></div>
<svg style="position:absolute;left:3100px;top:1226px;" width="20" height="44" viewBox="3100 1226 20 44"><circle cx="3110" cy="1235.8" r="4" fill="#2f3236"/><circle cx="3110" cy="1248" r="4" fill="#2f3236"/><circle cx="3110" cy="1260.2" r="4" fill="#2f3236"/></svg>
<div style="position:absolute;left:495.50px;top:1336.65px;font-size:33px;line-height:33px;height:33px;color:#2c90cd;font-weight:400;letter-spacing:0.420px;white-space:nowrap;">Customer Winback</div>
<div style="position:absolute;left:495.00px;top:1379.83px;font-size:25.5px;line-height:25.5px;height:25.5px;color:#5f6368;font-weight:400;letter-spacing:-0.182px;white-space:nowrap;">Placed Order</div>
<div style="position:absolute;left:1318px;top:1340px;width:56px;height:56px;box-sizing:border-box;background:#f1f2f4;border-radius:50%;"></div>
<svg style="position:absolute;left:1326px;top:1348px;" width="40" height="40" viewBox="1326 1348 40 40"><rect x="1331.9" y="1355.9" width="28.2" height="24.2" rx="4.6" fill="none" stroke="#60656b" stroke-width="3.7"/><path d="M1333.5,1362 L1346,1369.6 L1358.5,1362" fill="none" stroke="#60656b" stroke-width="3.7" stroke-linejoin="miter"/></svg>
<div style="position:absolute;left:1646px;top:1352px;width:32px;height:32px;box-sizing:border-box;background:#f6be08;border-radius:50%;"></div>
<div style="position:absolute;left:1701.70px;top:1351.95px;font-size:33px;line-height:33px;height:33px;color:#2f3236;font-weight:400;letter-spacing:0.300px;white-space:nowrap;">Manual</div>
<div style="position:absolute;left:1957.30px;top:1351.95px;font-size:33px;line-height:33px;height:33px;color:#2f3236;font-weight:400;letter-spacing:0.844px;white-space:nowrap;">Last month</div>
<div style="position:absolute;left:2454.20px;top:1351.95px;font-size:33px;line-height:33px;height:33px;color:#2f3236;font-weight:400;letter-spacing:1.167px;white-space:nowrap;">$994.92</div>
<div style="position:absolute;left:2942.50px;top:1351.95px;font-size:33px;line-height:33px;height:33px;color:#2f3236;font-weight:400;letter-spacing:1.050px;white-space:nowrap;">$4.68</div>
<div style="position:absolute;left:3078px;top:1336px;width:64px;height:64px;box-sizing:border-box;border:2px solid #737577;border-radius:8px;"></div>
<svg style="position:absolute;left:3100px;top:1346px;" width="20" height="44" viewBox="3100 1346 20 44"><circle cx="3110" cy="1355.8" r="4" fill="#2f3236"/><circle cx="3110" cy="1368" r="4" fill="#2f3236"/><circle cx="3110" cy="1380.2" r="4" fill="#2f3236"/></svg>
<div style="position:absolute;left:495.50px;top:1456.65px;font-size:33px;line-height:33px;height:33px;color:#2c90cd;font-weight:400;letter-spacing:0.429px;white-space:nowrap;">Customer Thank You</div>
<div style="position:absolute;left:495.00px;top:1499.83px;font-size:25.5px;line-height:25.5px;height:25.5px;color:#5f6368;font-weight:400;letter-spacing:-0.182px;white-space:nowrap;">Placed Order</div>
<div style="position:absolute;left:1318px;top:1460px;width:56px;height:56px;box-sizing:border-box;background:#f1f2f4;border-radius:50%;"></div>
<svg style="position:absolute;left:1326px;top:1468px;" width="40" height="40" viewBox="1326 1468 40 40"><rect x="1331.9" y="1475.9" width="28.2" height="24.2" rx="4.6" fill="none" stroke="#60656b" stroke-width="3.7"/><path d="M1333.5,1482 L1346,1489.6 L1358.5,1482" fill="none" stroke="#60656b" stroke-width="3.7" stroke-linejoin="miter"/></svg>
<div style="position:absolute;left:1390px;top:1460px;width:56px;height:56px;box-sizing:border-box;background:#f1f2f4;border-radius:50%;"></div>
<svg style="position:absolute;left:1398px;top:1468px;" width="40" height="40" viewBox="1398 1468 40 40"><path d="M1425.2,1500 A14 14 0 1 1 1430,1495.2 V1500 Z" fill="none" stroke="#60656b" stroke-width="3.8" stroke-linejoin="miter"/><path d="M1412,1484 H1424 M1412,1492 H1420" stroke="#60656b" stroke-width="3.4" stroke-linecap="round"/></svg>
<div style="position:absolute;left:1462px;top:1460px;width:56px;height:56px;box-sizing:border-box;background:#f1f2f4;border-radius:50%;"></div>
<svg style="position:absolute;left:1470px;top:1468px;" width="40" height="40" viewBox="1470 1468 40 40"><path d="M1489.4,1474 H1480.7 A4.5 4.5 0 0 0 1476.2,1478.5 V1497.4 A4.5 4.5 0 0 0 1480.7,1501.9 H1499.6 A4.5 4.5 0 0 0 1504.1,1497.4 V1488.2" fill="none" stroke="#60656b" stroke-width="3.8"/><circle cx="1499" cy="1479" r="5" fill="none" stroke="#60656b" stroke-width="3.6"/></svg>
<div style="position:absolute;left:1646px;top:1472px;width:32px;height:32px;box-sizing:border-box;background:#2fc97b;border-radius:50%;"></div>
<div style="position:absolute;left:1701.70px;top:1471.95px;font-size:33px;line-height:33px;height:33px;color:#2f3236;font-weight:400;letter-spacing:0.600px;white-space:nowrap;">Live</div>
<div style="position:absolute;left:1957.30px;top:1471.95px;font-size:33px;line-height:33px;height:33px;color:#2f3236;font-weight:400;letter-spacing:0.844px;white-space:nowrap;">Last month</div>
<div style="position:absolute;left:2453.30px;top:1471.95px;font-size:33px;line-height:33px;height:33px;color:#2f3236;font-weight:400;letter-spacing:1.317px;white-space:nowrap;">$438.29</div>
<div style="position:absolute;left:2942.50px;top:1471.95px;font-size:33px;line-height:33px;height:33px;color:#2f3236;font-weight:400;letter-spacing:1.050px;white-space:nowrap;">$6.38</div>
<div style="position:absolute;left:3078px;top:1456px;width:64px;height:64px;box-sizing:border-box;border:2px solid #737577;border-radius:8px;"></div>
<svg style="position:absolute;left:3100px;top:1466px;" width="20" height="44" viewBox="3100 1466 20 44"><circle cx="3110" cy="1475.8" r="4" fill="#2f3236"/><circle cx="3110" cy="1488" r="4" fill="#2f3236"/><circle cx="3110" cy="1500.2" r="4" fill="#2f3236"/></svg>
<div style="position:absolute;left:494.50px;top:1576.65px;font-size:33px;line-height:33px;height:33px;color:#2c90cd;font-weight:400;letter-spacing:0.471px;white-space:nowrap;">Browse Abandonment</div>
<div style="position:absolute;left:497.00px;top:1619.83px;font-size:25.5px;line-height:25.5px;height:25.5px;color:#5f6368;font-weight:400;letter-spacing:-0.100px;white-space:nowrap;">Viewed Product</div>
<div style="position:absolute;left:1318px;top:1580px;width:56px;height:56px;box-sizing:border-box;background:#f1f2f4;border-radius:50%;"></div>
<svg style="position:absolute;left:1326px;top:1588px;" width="40" height="40" viewBox="1326 1588 40 40"><rect x="1331.9" y="1595.9" width="28.2" height="24.2" rx="4.6" fill="none" stroke="#60656b" stroke-width="3.7"/><path d="M1333.5,1602 L1346,1609.6 L1358.5,1602" fill="none" stroke="#60656b" stroke-width="3.7" stroke-linejoin="miter"/></svg>
<div style="position:absolute;left:1646px;top:1592px;width:32px;height:32px;box-sizing:border-box;background:#8e9196;border-radius:50%;"></div>
<div style="position:absolute;left:1701.70px;top:1591.95px;font-size:33px;line-height:33px;height:33px;color:#2f3236;font-weight:400;letter-spacing:1.200px;white-space:nowrap;">Draft</div>
<div style="position:absolute;left:1957.30px;top:1591.95px;font-size:33px;line-height:33px;height:33px;color:#2f3236;font-weight:400;letter-spacing:0.844px;white-space:nowrap;">Last month</div>
<div style="position:absolute;left:2495.40px;top:1591.95px;font-size:33px;line-height:33px;height:33px;color:#2f3236;font-weight:400;letter-spacing:0.450px;white-space:nowrap;">$0.00</div>
<div style="position:absolute;left:2943.90px;top:1591.95px;font-size:33px;line-height:33px;height:33px;color:#2f3236;font-weight:400;letter-spacing:0.450px;white-space:nowrap;">$0.00</div>
<div style="position:absolute;left:3078px;top:1576px;width:64px;height:64px;box-sizing:border-box;border:2px solid #737577;border-radius:8px;"></div>
<svg style="position:absolute;left:3100px;top:1586px;" width="20" height="44" viewBox="3100 1586 20 44"><circle cx="3110" cy="1595.8" r="4" fill="#2f3236"/><circle cx="3110" cy="1608" r="4" fill="#2f3236"/><circle cx="3110" cy="1620.2" r="4" fill="#2f3236"/></svg>
<div style="position:absolute;left:494.50px;top:1696.65px;font-size:33px;line-height:33px;height:33px;color:#2c90cd;font-weight:400;letter-spacing:0.471px;white-space:nowrap;">Browse Abandonment</div>
<div style="position:absolute;left:497.00px;top:1739.83px;font-size:25.5px;line-height:25.5px;height:25.5px;color:#5f6368;font-weight:400;letter-spacing:-0.100px;white-space:nowrap;">Viewed Product</div>
<div style="position:absolute;left:1318px;top:1700px;width:56px;height:56px;box-sizing:border-box;background:#f1f2f4;border-radius:50%;"></div>
<svg style="position:absolute;left:1326px;top:1708px;" width="40" height="40" viewBox="1326 1708 40 40"><path d="M1353.2,1740 A14 14 0 1 1 1358,1735.2 V1740 Z" fill="none" stroke="#60656b" stroke-width="3.8" stroke-linejoin="miter"/><path d="M1340,1724 H1352 M1340,1732 H1348" stroke="#60656b" stroke-width="3.4" stroke-linecap="round"/></svg>
<div style="position:absolute;left:1390px;top:1700px;width:56px;height:56px;box-sizing:border-box;background:#f1f2f4;border-radius:50%;"></div>
<svg style="position:absolute;left:1398px;top:1708px;" width="40" height="40" viewBox="1398 1708 40 40"><path d="M1425.2,1740 A14 14 0 1 1 1430,1735.2 V1740 Z" fill="none" stroke="#60656b" stroke-width="3.8" stroke-linejoin="miter"/><path d="M1412,1724 H1424 M1412,1732 H1420" stroke="#60656b" stroke-width="3.4" stroke-linecap="round"/></svg>
<div style="position:absolute;left:1646px;top:1712px;width:32px;height:32px;box-sizing:border-box;background:#2fc97b;border-radius:50%;"></div>
<div style="position:absolute;left:1701.70px;top:1711.95px;font-size:33px;line-height:33px;height:33px;color:#2f3236;font-weight:400;letter-spacing:0.600px;white-space:nowrap;">Live</div>
<div style="position:absolute;left:1957.30px;top:1711.95px;font-size:33px;line-height:33px;height:33px;color:#2f3236;font-weight:400;letter-spacing:0.844px;white-space:nowrap;">Last month</div>
<div style="position:absolute;left:2426.20px;top:1711.95px;font-size:33px;line-height:33px;height:33px;color:#2f3236;font-weight:400;letter-spacing:0.875px;white-space:nowrap;">$6,048.65</div>
<div style="position:absolute;left:2932.40px;top:1711.95px;font-size:33px;line-height:33px;height:33px;color:#2f3236;font-weight:400;letter-spacing:-0.540px;white-space:nowrap;">$11.44</div>
<div style="position:absolute;left:3078px;top:1696px;width:64px;height:64px;box-sizing:border-box;border:2px solid #737577;border-radius:8px;"></div>
<svg style="position:absolute;left:3100px;top:1706px;" width="20" height="44" viewBox="3100 1706 20 44"><circle cx="3110" cy="1715.8" r="4" fill="#2f3236"/><circle cx="3110" cy="1728" r="4" fill="#2f3236"/><circle cx="3110" cy="1740.2" r="4" fill="#2f3236"/></svg>
<svg style="position:absolute;left:2762px;top:1858px;" width="28" height="34" viewBox="2762 1858 28 34"><path d="M2781,1866 L2771.5,1875.5 L2781,1885" fill="none" stroke="#8e9194" stroke-width="4" stroke-linecap="round" stroke-linejoin="round"/></svg>
<div style="position:absolute;left:2796.40px;top:1862.65px;font-size:31px;line-height:31px;height:31px;color:#8e9194;font-weight:400;letter-spacing:0.433px;white-space:nowrap;">Prev</div>
<div style="position:absolute;left:2912px;top:1852px;width:48px;height:48px;box-sizing:border-box;border:2px solid #6f7276;border-radius:6px;"></div>
<div style="position:absolute;left:2927.50px;top:1862.65px;font-size:31px;line-height:31px;height:31px;color:#2c90cd;font-weight:400;letter-spacing:-2.800px;white-space:nowrap;">1</div>
<div style="position:absolute;left:2976.40px;top:1862.65px;font-size:31px;line-height:31px;height:31px;color:#2c90cd;font-weight:400;letter-spacing:1.100px;white-space:nowrap;">2</div>
<div style="position:absolute;left:3059.00px;top:1861.80px;font-size:32px;line-height:32px;height:32px;color:#2c90cd;font-weight:400;letter-spacing:1.100px;white-space:nowrap;">Next</div>
<svg style="position:absolute;left:3136px;top:1858px;" width="28" height="34" viewBox="3136 1858 28 34"><path d="M3145,1866 L3154.5,1875.5 L3145,1885" fill="none" stroke="#2c90cd" stroke-width="4" stroke-linecap="round" stroke-linejoin="round"/></svg>
</body></html>
